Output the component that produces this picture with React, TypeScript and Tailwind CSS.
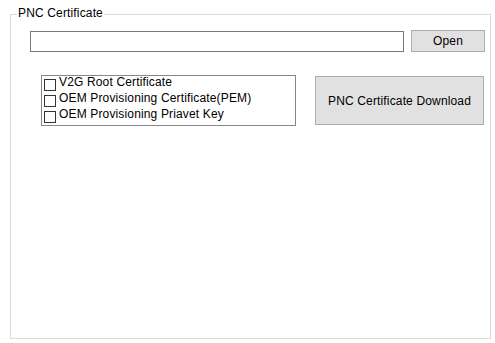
import React from "react";

const items = [
  "V2G Root Certificate",
  "OEM Provisioning Certificate(PEM)",
  "OEM Provisioning Priavet Key",
];

export default function App() {
  return (
    <div
      className="w-[495px] h-[343px] bg-white overflow-hidden pt-[14px] pl-[10px] tracking-[0.15px]"
      style={{ fontFamily: '"Liberation Sans", Arial, sans-serif' }}
    >
      <div className="relative w-[481px] h-[325px] border border-[#dcdcdc]">
        <span className="absolute left-[6px] top-[-9px] bg-white px-[1px] text-[12px] leading-[14px] text-black">
          PNC Certificate
        </span>
        <div className="flex items-center pl-[19px] pt-[15px]">
          <div className="w-[374px] h-[21px] border border-[#7a7a7a] bg-white" />
          <button className="ml-[7px] w-[74px] h-[22px] border border-[#adadad] bg-[#e1e1e1] text-[12px] leading-[14px] text-black">
            Open
          </button>
        </div>
        <div className="flex items-start pl-[30px] mt-[23px]">
          <div className="w-[255px] h-[51px] border border-[#828790] bg-white flex flex-col">
            {items.map((t) => (
              <div key={t} className="h-[16px] flex items-start pl-[2px]">
                <div className="mt-[3px] w-[12px] h-[12px] border border-[#333333] bg-white shrink-0" />
                <span className="ml-[3px] text-[12px] leading-[12px] text-black whitespace-nowrap">
                  {t}
                </span>
              </div>
            ))}
          </div>
          <button className="ml-[19px] mt-[1px] w-[169px] h-[49px] border border-[#adadad] bg-[#e1e1e1] text-[12px] leading-[14px] text-black">
            PNC Certificate Download
          </button>
        </div>
      </div>
    </div>
  );
}
